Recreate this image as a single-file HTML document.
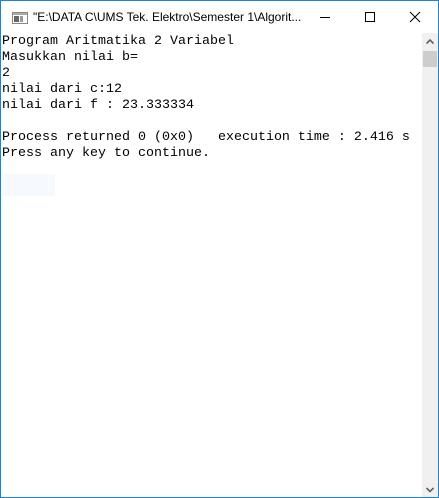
<!DOCTYPE html>
<html><head><style>
body{margin:0;width:439px;height:498px;overflow:hidden;background:#fff;}
.win{position:absolute;left:0;top:0;width:437px;height:496px;border:1px solid #1883d7;background:#fff;}
.title{position:absolute;left:0;top:0;width:437px;height:32px;background:#fff;font:12px "Liberation Sans",sans-serif;color:#000;}
.title .t{position:absolute;left:32px;top:9px;}
.con{position:absolute;left:1px;top:33px;font:13.33px/16px "Liberation Mono",monospace;color:#000;white-space:pre;}
.sb{position:absolute;left:421px;top:32px;width:16px;height:464px;background:#f0f0f0;}
.thumb{position:absolute;left:1px;top:18px;width:14px;height:16px;background:#cdcdcd;}
</style></head><body>
<div class="win">
<div class="title">
<svg style="position:absolute;left:11px;top:11px" width="16" height="12"><rect x="0.5" y="0.5" width="15" height="11" fill="#fff" stroke="#888"/><rect x="1" y="1" width="14" height="2" fill="#aaa"/><rect x="2" y="4" width="5" height="6" fill="#666"/><rect x="8" y="4" width="3" height="6" fill="#999"/></svg>
<span class="t">"E:\DATA C\UMS Tek. Elektro\Semester 1\Algorit...</span>
<svg style="position:absolute;left:318px;top:10px" width="12" height="12"><line x1="1" y1="6.5" x2="11" y2="6.5" stroke="#000"/></svg>
<svg style="position:absolute;left:363px;top:10px" width="12" height="12"><rect x="1.5" y="1.5" width="9" height="9" fill="none" stroke="#000"/></svg>
<svg style="position:absolute;left:408px;top:10px" width="12" height="12"><path d="M1 1L11 11M11 1L1 11" stroke="#000"/></svg>
</div>
<div style="position:absolute;left:2px;top:173px;width:52px;height:22px;background:#f6faff"></div>
<div class="con">Program Aritmatika 2 Variabel
Masukkan nilai b=
2
nilai dari c:12
nilai dari f : 23.333334

Process returned 0 (0x0)   execution time : 2.416 s
Press any key to continue.</div>
<div class="sb"><svg style="position:absolute;left:4px;top:6px" width="8" height="6"><path d="M0.5 4.5L4 1L7.5 4.5" stroke="#606060" stroke-width="1.6" fill="none"/></svg><div class="thumb"></div>
<svg style="position:absolute;left:4px;top:454px" width="8" height="6"><path d="M0.5 1L4 4.5L7.5 1" stroke="#606060" stroke-width="1.6" fill="none"/></svg></div>
</div>
</body></html>
